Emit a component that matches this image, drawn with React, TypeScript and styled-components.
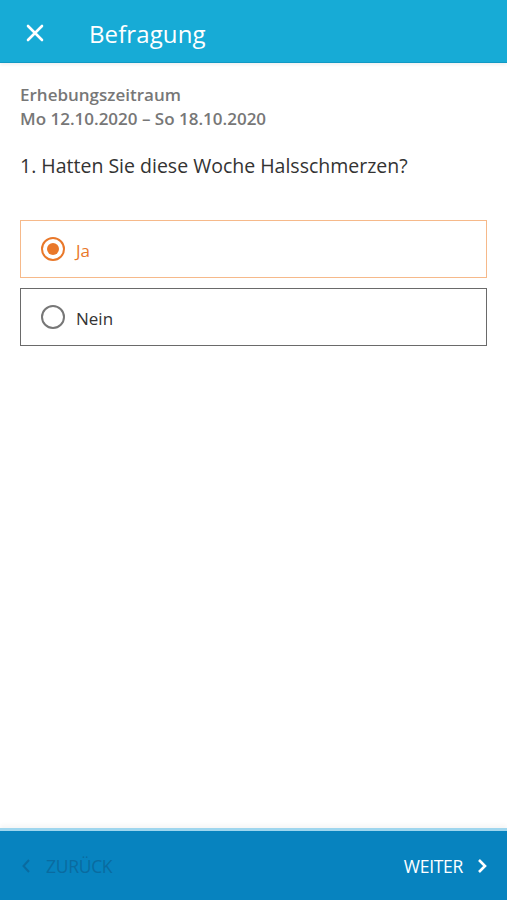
import styled, { createGlobalStyle } from 'styled-components';
import { useState } from 'react';

const GlobalStyle = createGlobalStyle`
    html, body {
        margin: 0;
        padding: 0;
        background: #ffffff;
        font-family: "Open Sans", "Noto Sans", sans-serif;
    }
    * { box-sizing: border-box; }
`;

const Page = styled.div`
    display: flex;
    flex-direction: column;
    min-height: 100vh;
`;

const Header = styled.header`
    height: 63px;
    background-color: #17abd6;
    border-bottom: 1px solid #1199c4;
    box-shadow: 0 2px 3px rgba(0, 0, 0, 0.06);
    display: flex;
    align-items: center;
    padding: 4px 0 0 26px;
    gap: 45px;
    color: #ffffff;
`;

const CloseButton = styled.button`
    background: none;
    border: none;
    padding: 0;
    width: 18px;
    height: 18px;
    display: flex;
    cursor: pointer;
`;

const Title = styled.h1`
    margin: 0;
    font-size: 24px;
    font-weight: 400;
    letter-spacing: 0.1px;
`;

const Content = styled.main`
    flex: 1;
    padding: 20px 20px 0;
`;

const Meta = styled.div`
    color: #777777;
    font-size: 17px;
    font-weight: 600;
    line-height: 24px;
`;

const Question = styled.h2`
    margin: 22px 0 41px;
    font-size: 19.5px;
    font-weight: 400;
    color: #333333;
    line-height: 26px;
`;

const Options = styled.div`
    display: flex;
    flex-direction: column;
    gap: 10px;
`;

const OptionBox = styled.label<{ $selected: boolean }>`
    height: 58px;
    display: flex;
    align-items: center;
    gap: 11px;
    padding-left: 20px;
    border: 1.5px solid ${p => (p.$selected ? '#f6b98a' : '#6a6a6a')};
    color: ${p => (p.$selected ? '#e9782a' : '#333333')};
    font-size: 17px;
    cursor: pointer;
`;

const OptionText = styled.span`
    padding-top: 3px;
`;

const RadioCircle = styled.span<{ $selected: boolean }>`
    width: 24px;
    height: 24px;
    border-radius: 50%;
    border: 2px solid ${p => (p.$selected ? '#e9782a' : '#777777')};
    display: flex;
    align-items: center;
    justify-content: center;

    &::after {
        content: '';
        width: 12px;
        height: 12px;
        border-radius: 50%;
        background: ${p => (p.$selected ? '#e9782a' : 'transparent')};
    }
`;

const Footer = styled.footer`
    height: 72px;
    background-color: #0783bf;
    border-top: 3px solid #9fd6ee;
    box-shadow: 0 -3px 4px rgba(0, 0, 0, 0.04);
    display: flex;
    align-items: center;
    justify-content: space-between;
    padding: 0 20px 0 22px;
`;

const NavButton = styled.button<{ $disabled?: boolean }>`
    background: none;
    border: none;
    padding: 0;
    display: flex;
    align-items: center;
    gap: ${p => (p.$disabled ? '16px' : '14px')};
    font-family: inherit;
    font-size: 17.5px;
    text-transform: uppercase;
    letter-spacing: -0.3px;
    color: ${p => (p.$disabled ? '#0a6ba0' : '#ffffff')};
    cursor: ${p => (p.$disabled ? 'default' : 'pointer')};
`;

const options = ['Ja', 'Nein'];

export default function App() {
    const [selected, setSelected] = useState('Ja');

    return (
        <Page>
            <GlobalStyle />
            <Header>
                <CloseButton aria-label="Schließen">
                    <svg width="18" height="18" viewBox="0 0 18 18">
                        <path d="M2 2 L16 16 M16 2 L2 16" stroke="#ffffff" strokeWidth="2.6" strokeLinecap="round" />
                    </svg>
                </CloseButton>
                <Title>Befragung</Title>
            </Header>
            <Content>
                <Meta>Erhebungszeitraum</Meta>
                <Meta>Mo 12.10.2020 – So 18.10.2020</Meta>
                <Question>1. Hatten Sie diese Woche Halsschmerzen?</Question>
                <Options>
                    {options.map(opt => (
                        <OptionBox key={opt} $selected={selected === opt} onClick={() => setSelected(opt)}>
                            <RadioCircle $selected={selected === opt} />
                            <OptionText>{opt}</OptionText>
                        </OptionBox>
                    ))}
                </Options>
            </Content>
            <Footer>
                <NavButton $disabled>
                    <svg width="8" height="14" viewBox="0 0 8 14">
                        <path d="M7 1 L1.5 7 L7 13" fill="none" stroke="#0a6ba0" strokeWidth="2" />
                    </svg>
                    Zurück
                </NavButton>
                <NavButton>
                    Weiter
                    <svg width="10" height="16" viewBox="0 0 10 16">
                        <path d="M2 2 L8 8 L2 14" fill="none" stroke="#ffffff" strokeWidth="2.6" />
                    </svg>
                </NavButton>
            </Footer>
        </Page>
    );
}
